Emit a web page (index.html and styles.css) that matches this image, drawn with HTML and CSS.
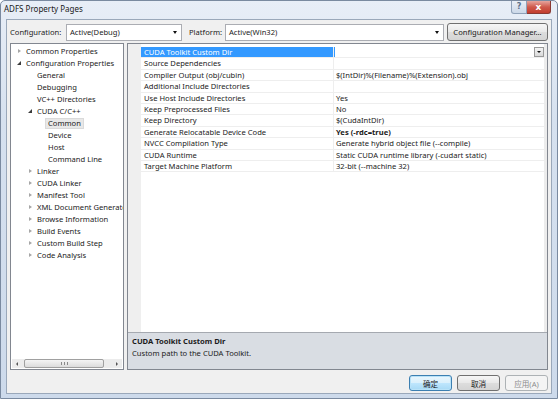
FILE: index.html
```html
<!DOCTYPE html>
<html lang="en">
<head>
  <meta charset="UTF-8">
  <title>ADFS Property Pages</title>
  <link rel="stylesheet" href="styles.css">
</head>
<body>
  <div class="window">
    <!-- title bar -->
    <div class="titlebar">
      <span class="title">ADFS Property Pages</span>
      <div class="caption-btns">
        <span class="cap-btn help">?</span>
        <span class="cap-btn close">x</span>
      </div>
    </div>

    <div class="client">
      <!-- configuration row -->
      <div class="config-row">
        <span class="lbl">Configuration:</span>
        <div class="combo combo-config"><span>Active(Debug)</span><i class="drop"></i></div>
        <span class="lbl lbl-platform">Platform:</span>
        <div class="combo combo-platform"><span>Active(Win32)</span><i class="drop"></i></div>
        <button class="btn btn-manager">Configuration Manager...</button>
      </div>

      <div class="main">
        <!-- tree -->
        <div class="tree">
          <div class="node lv0"><i class="arr closed"></i><span>Common Properties</span></div>
          <div class="node lv0"><i class="arr open"></i><span>Configuration Properties</span></div>
          <div class="node lv1"><i class="arr"></i><span>General</span></div>
          <div class="node lv1"><i class="arr"></i><span>Debugging</span></div>
          <div class="node lv1"><i class="arr"></i><span>VC++ Directories</span></div>
          <div class="node lv1"><i class="arr open"></i><span>CUDA C/C++</span></div>
          <div class="node lv2"><i class="arr"></i><span class="sel">Common</span></div>
          <div class="node lv2"><i class="arr"></i><span>Device</span></div>
          <div class="node lv2"><i class="arr"></i><span>Host</span></div>
          <div class="node lv2"><i class="arr"></i><span>Command Line</span></div>
          <div class="node lv1"><i class="arr closed"></i><span>Linker</span></div>
          <div class="node lv1"><i class="arr closed"></i><span>CUDA Linker</span></div>
          <div class="node lv1"><i class="arr closed"></i><span>Manifest Tool</span></div>
          <div class="node lv1"><i class="arr closed"></i><span>XML Document Generator</span></div>
          <div class="node lv1"><i class="arr closed"></i><span>Browse Information</span></div>
          <div class="node lv1"><i class="arr closed"></i><span>Build Events</span></div>
          <div class="node lv1"><i class="arr closed"></i><span>Custom Build Step</span></div>
          <div class="node lv1"><i class="arr closed"></i><span>Code Analysis</span></div>

          <div class="hscroll">
            <span class="sb-arrow left"></span>
            <span class="sb-track"><span class="sb-thumb"><span class="grip"></span></span></span>
            <span class="sb-arrow right"></span>
          </div>
        </div>

        <!-- property grid -->
        <div class="props">
          <div class="grid">
            <div class="row selected">
              <div class="name">CUDA Toolkit Custom Dir</div>
              <div class="value editing"><span></span><i class="cell-drop"></i></div>
            </div>
            <div class="row"><div class="name">Source Dependencies</div><div class="value"></div></div>
            <div class="row"><div class="name">Compiler Output (obj/cubin)</div><div class="value">$(IntDir)%(Filename)%(Extension).obj</div></div>
            <div class="row"><div class="name">Additional Include Directories</div><div class="value"></div></div>
            <div class="row"><div class="name">Use Host Include Directories</div><div class="value">Yes</div></div>
            <div class="row"><div class="name">Keep Preprocessed Files</div><div class="value">No</div></div>
            <div class="row"><div class="name">Keep Directory</div><div class="value">$(CudaIntDir)</div></div>
            <div class="row"><div class="name">Generate Relocatable Device Code</div><div class="value bold">Yes (-rdc=true)</div></div>
            <div class="row"><div class="name">NVCC Compilation Type</div><div class="value">Generate hybrid object file (--compile)</div></div>
            <div class="row"><div class="name">CUDA Runtime</div><div class="value">Static CUDA runtime library (-cudart static)</div></div>
            <div class="row"><div class="name">Target Machine Platform</div><div class="value">32-bit (--machine 32)</div></div>
          </div>
          <div class="desc">
            <div class="desc-title">CUDA Toolkit Custom Dir</div>
            <div class="desc-text">Custom path to the CUDA Toolkit.</div>
          </div>
        </div>
      </div>

      <!-- dialog buttons -->
      <div class="button-row">
        <button class="btn dlg default">确定</button>
        <button class="btn dlg">取消</button>
        <button class="btn dlg disabled">应用(A)</button>
      </div>
    </div>
  </div>
</body>
</html>
```

FILE: styles.css
```css
html, body {
  margin: 0;
  background: #ffffff;
}

body {
  width: 558px;
  height: 399px;
  font-family: "Noto Sans", "Open Sans", sans-serif;
  font-size: 7.6px;
  color: #1b1b1b;
}

.window {
  box-sizing: border-box;
  height: 399px;
  display: flex;
  flex-direction: column;
  border: 1px solid #7a8aa0;
  border-radius: 5px 5px 0 0;
  background: linear-gradient(#e8eef7, #d6e1ef 30%, #cddaeb);
  padding: 0 5px 4px 5px;
}

/* title bar */
.titlebar {
  height: 18px;
  display: flex;
  justify-content: space-between;
  margin: 0 -2px 0 -2px;
}

.title {
  font-size: 8px;
  color: #1a1a1a;
  line-height: 16px;
}

.caption-btns {
  display: flex;
  align-self: flex-start;
  margin-right: 3px;
}

.cap-btn {
  display: inline-block;
  height: 13px;
  line-height: 12px;
  text-align: center;
  box-sizing: border-box;
  font-family: "DejaVu Sans", sans-serif;
  font-weight: bold;
}

.cap-btn.help {
  width: 16px;
  border: 1px solid #8fa1b8;
  border-top: none;
  border-radius: 0 0 0 3px;
  background: linear-gradient(#e9eff7, #cbd8e8);
  color: #5d6f88;
  font-size: 8px;
}

.cap-btn.close {
  width: 24px;
  border: 1px solid #8a3a33;
  border-top: none;
  border-left: none;
  border-radius: 0 0 3px 0;
  background: linear-gradient(#e6a59e, #cf5a4c 50%, #c23d2f);
  color: #ffffff;
  font-size: 9px;
}

/* client area */
.client {
  flex: 1;
  display: flex;
  flex-direction: column;
  background: #f0f0f0;
  border: 1px solid #9aa8ba;
  padding: 3px 3px 2px 3px;
  min-height: 0;
}

.config-row {
  height: 18px;
  display: flex;
  align-items: center;
}

.lbl {
  margin-left: 0;
  width: 56px;
}

.lbl-platform {
  width: 36px;
  margin-left: 7px;
}

.combo {
  box-sizing: border-box;
  height: 17px;
  display: flex;
  align-items: center;
  justify-content: space-between;
  border: 1px solid #abadb3;
  background: #ffffff;
  padding-left: 3px;
}

.combo-config {
  width: 116px;
}

.combo-platform {
  width: 219px;
}

.drop {
  width: 0;
  height: 0;
  margin-right: 4px;
  border-left: 2.5px solid transparent;
  border-right: 2.5px solid transparent;
  border-top: 3px solid #111111;
}

.btn {
  box-sizing: border-box;
  font-family: "Noto Sans", "Noto Sans CJK SC", sans-serif;
  font-size: 7.6px;
  color: #1b1b1b;
  border: 1px solid #707070;
  border-radius: 3px;
  background: linear-gradient(#f6f6f6, #e8e8e8 50%, #dddddd 51%, #d4d4d4);
  padding: 0;
}

.btn-manager {
  width: 101px;
  height: 18px;
  margin-left: auto;
}

/* main area */
.main {
  flex: 1;
  display: flex;
  gap: 3px;
  margin-top: 2px;
  min-height: 0;
}

.tree {
  box-sizing: border-box;
  width: 114px;
  display: flex;
  flex-direction: column;
  border: 1px solid #828790;
  background: #ffffff;
  padding-top: 1px;
  overflow: hidden;
}

.node {
  height: 12px;
  display: flex;
  align-items: center;
  white-space: nowrap;
}

.node.lv0 { padding-left: 5px; }
.node.lv1 { padding-left: 16px; }
.node.lv2 { padding-left: 27px; }

.arr {
  width: 10px;
  height: 12px;
  flex: none;
  position: relative;
}

.arr.closed::before {
  content: '';
  position: absolute;
  left: 2px;
  top: 3.5px;
  border-top: 2.5px solid transparent;
  border-bottom: 2.5px solid transparent;
  border-left: 3px solid #a6a6a6;
}

.arr.open::before {
  content: '';
  position: absolute;
  left: 1px;
  top: 4px;
  border-left: 4px solid transparent;
  border-bottom: 4px solid #3c3c3c;
}

.sel {
  background: #e8e8e8;
  border: 1px solid #dadada;
  padding: 0 2px;
  margin-left: -3px;
  line-height: 9px;
}

.hscroll {
  margin: auto 1px 1px 1px;
  height: 9px;
  display: flex;
  background: #ececec;
}

.sb-arrow {
  width: 11px;
  position: relative;
}

.sb-arrow.left::before,
.sb-arrow.right::before {
  content: '';
  position: absolute;
  top: 2.5px;
  border-top: 2px solid transparent;
  border-bottom: 2px solid transparent;
}

.sb-arrow.left::before {
  left: 4px;
  border-right: 2px solid #555555;
}

.sb-arrow.right::before {
  left: 5px;
  border-left: 2px solid #555555;
}

.sb-track {
  flex: 1;
  padding: 0 1px;
}

.sb-thumb {
  box-sizing: border-box;
  display: flex;
  justify-content: center;
  align-items: center;
  width: 80px;
  height: 9px;
  border: 1px solid #a0a0a0;
  border-radius: 2px;
  background: linear-gradient(#f4f4f4, #dcdcdc);
}

.grip {
  width: 5px;
  height: 3px;
  border-left: 1px solid #8a8a8a;
  border-right: 1px solid #8a8a8a;
  position: relative;
}

.grip::before {
  content: '';
  position: absolute;
  left: 2px;
  top: 0;
  height: 3px;
  border-left: 1px solid #8a8a8a;
}

/* property grid */
.props {
  flex: 1;
  display: flex;
  flex-direction: column;
  border: 1px solid #828790;
  min-width: 0;
}

.grid {
  flex: 1;
  padding: 3px 3px 0 13px;
  background: linear-gradient(to right, #efefef 13px, #ffffff 13px, #ffffff calc(100% - 3px), #ececec calc(100% - 3px));
}

.row {
  box-sizing: border-box;
  height: 11.4px;
  display: flex;
  border-bottom: 1px solid #eeeeee;
  white-space: nowrap;
}

.name {
  width: 189px;
  flex: none;
  padding-left: 3px;
  line-height: 10.4px;
  border-right: 1px solid #eeeeee;
  overflow: hidden;
}

.value {
  flex: 1;
  padding-left: 2px;
  line-height: 10.4px;
  overflow: hidden;
}

.value.bold {
  font-weight: bold;
}

.row.selected .name {
  background: #3399ff;
  color: #ffffff;
}

.value.editing {
  display: flex;
  justify-content: space-between;
  align-items: center;
  border-left: 1px solid #3399ff;
  padding-right: 0;
}

.cell-drop {
  box-sizing: border-box;
  width: 10px;
  height: 10px;
  border: 1px solid #9a9a9a;
  background: linear-gradient(#f4f4f4, #d8d8d8);
  position: relative;
}

.cell-drop::before {
  content: '';
  position: absolute;
  left: 2px;
  top: 3px;
  border-left: 2px solid transparent;
  border-right: 2px solid transparent;
  border-top: 2.5px solid #111111;
}

.desc {
  box-sizing: border-box;
  height: 37px;
  background: #d9dde3;
  border-top: 1px solid #a5a9b0;
  padding: 2px 4px;
}

.desc-title {
  font-weight: bold;
  line-height: 12px;
}

.desc-text {
  line-height: 12px;
}

/* dialog buttons */
.button-row {
  display: flex;
  justify-content: flex-end;
  gap: 5px;
  margin-top: 5px;
}

.btn.dlg {
  width: 43px;
  height: 16px;
  font-size: 7.6px;
}

.btn.dlg.default {
  border-color: #3c7fb1;
  box-shadow: inset 0 0 0 1px #b8e2f8;
  background: linear-gradient(#eaf6fd, #d9f0fc 50%, #bee6fd 51%, #a7d9f5);
}

.btn.dlg.disabled {
  color: #8c8c8c;
  border-color: #adb2b5;
  background: #f4f4f4;
}
```
